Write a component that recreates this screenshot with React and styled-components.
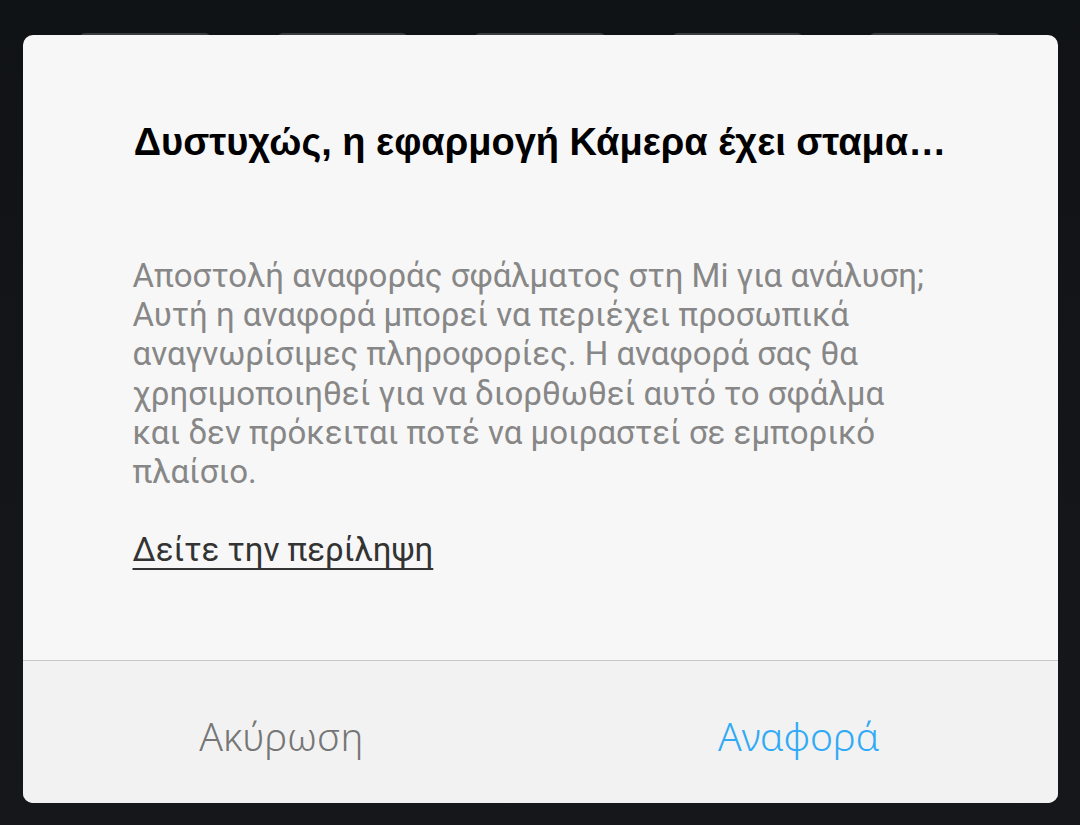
import React from 'react';
import styled, { createGlobalStyle } from 'styled-components';

const Global = createGlobalStyle`
  html, body {
    margin: 0;
    padding: 0;
    background: #121518;
  }
  body {
    font-family: Roboto, "Noto Sans", sans-serif;
  }
`;

const Screen = styled.div`
  width: 1080px;
  height: 825px;
  background: linear-gradient(#101316, #16171b);
  display: flex;
  flex-direction: column;
  align-items: center;
  padding-top: 33px;
  box-sizing: border-box;
  overflow: hidden;
`;

const BackTabs = styled.div`
  display: flex;
  gap: 66px;
  height: 2px;
  width: 922px;
`;

const BackTab = styled.div`
  width: 132px;
  height: 12px;
  border-radius: 8px;
  background: #3b3c3e;
`;

const Dialog = styled.div`
  width: 1035px;
  height: 768px;
  background: #f7f7f7;
  border-radius: 10px;
  display: flex;
  flex-direction: column;
  overflow: hidden;
`;

const Title = styled.h1`
  margin: 85px 0 0;
  font-family: "Liberation Sans", Arial, sans-serif;
  font-weight: 700;
  font-size: 38px;
  line-height: 44px;
  color: #000;
  text-align: center;
  white-space: nowrap;
`;

const Body = styled.div`
  flex: 1;
  padding: 0 120px 0 110px;
  display: flex;
  flex-direction: column;
`;

const Message = styled.p`
  margin: 92px 0 0;
  font-size: 33px;
  line-height: 39.2px;
  color: #878787;
`;

const Link = styled.a`
  margin-top: 39px;
  align-self: flex-start;
  font-size: 33px;
  line-height: 39px;
  color: #333;
  text-decoration: underline;
  text-underline-offset: 7px;
  text-decoration-thickness: 2px;
`;

const Footer = styled.div`
  height: 142px;
  border-top: 1px solid #c9c9c9;
  background: #f2f2f2;
  display: grid;
  grid-template-columns: 1fr 1fr;
  align-items: center;
`;

const Action = styled.button`
  border: none;
  background: none;
  font-family: "Noto Sans", Roboto, sans-serif;
  font-size: 39px;
  font-weight: 300;
  color: ${p => (p.primary ? '#31aaf6' : '#767676')};
  padding: 0;
  margin-top: 6px;
  justify-self: center;
`;

export default function App() {
  return (
    <Screen>
      <Global />
      <BackTabs>
        {[0, 1, 2, 3, 4].map(i => <BackTab key={i} />)}
      </BackTabs>
      <Dialog>
        <Title>Δυστυχώς, η εφαρμογή Κάμερα έχει σταμα…</Title>
        <Body>
          <Message>
            Αποστολή αναφοράς σφάλματος στη Mi για ανάλυση; Αυτή η αναφορά μπορεί να περιέχει
            προσωπικά αναγνωρίσιμες πληροφορίες. Η αναφορά σας θα χρησιμοποιηθεί για να
            διορθωθεί αυτό το σφάλμα και δεν πρόκειται ποτέ να μοιραστεί σε εμπορικό πλαίσιο.
          </Message>
          <Link>Δείτε την περίληψη</Link>
        </Body>
        <Footer>
          <Action>Ακύρωση</Action>
          <Action primary>Αναφορά</Action>
        </Footer>
      </Dialog>
    </Screen>
  );
}
